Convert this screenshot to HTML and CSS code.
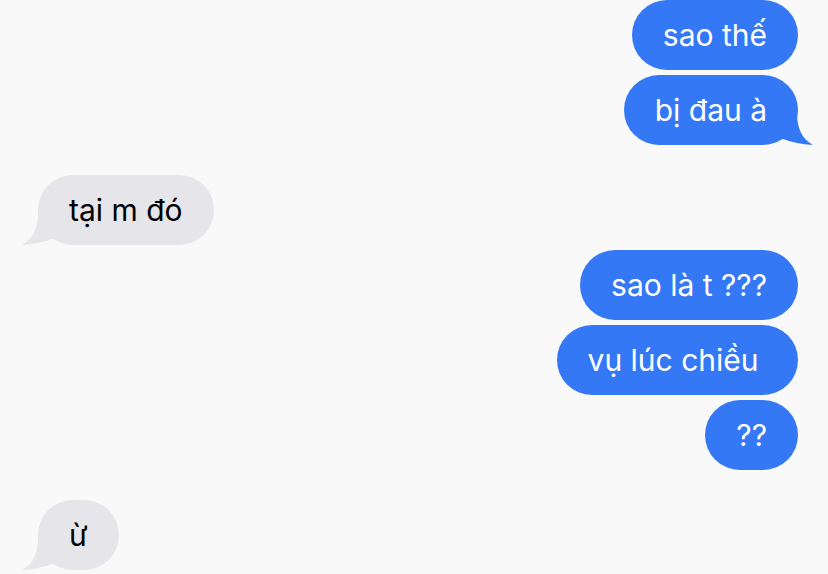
FILE: index.html
```html
<!DOCTYPE html>
<html lang="vi">
<head>
<meta charset="utf-8">
<link rel="stylesheet" href="styles.css">
</head>
<body>
<div class="thread">
  <div class="group group-me">
    <div class="bubble me">sao thế</div>
    <div class="bubble me tail">bị đau à<svg class="tail-svg tail-me" viewBox="0 0 40 40" width="40" height="40"><path d="M23 4 Q22 30 39 39 Q22 38 9 33 L0 30 L0 0 Z" fill="#3478f6"/></svg></div>
  </div>
  <div class="group group-them spaced">
    <div class="bubble them tail">tại m đó<svg class="tail-svg tail-them" viewBox="0 0 40 40" width="40" height="40"><path d="M17 4 Q18 30 1 39 Q18 38 31 33 L40 30 L40 0 Z" fill="#e5e5ea"/></svg></div>
  </div>
  <div class="group group-me">
    <div class="bubble me">sao là t ???</div>
    <div class="bubble me">vụ lúc chiều </div>
    <div class="bubble me">??</div>
  </div>
  <div class="group group-them spaced">
    <div class="bubble them tail">ừ<svg class="tail-svg tail-them" viewBox="0 0 40 40" width="40" height="40"><path d="M17 4 Q18 30 1 39 Q18 38 31 33 L40 30 L40 0 Z" fill="#e5e5ea"/></svg></div>
  </div>
</div>
</body>
</html>
```

FILE: styles.css
```css
* { box-sizing: border-box; }
html, body {
  margin: 0;
  padding: 0;
  background: #f9f9f9;
}
body {
  width: 828px;
  height: 574px;
  overflow: hidden;
  font-family: "Inter", "Liberation Sans", sans-serif;
}
.thread {
  display: flex;
  flex-direction: column;
  gap: 5px;
  padding: 0 30px 0 38px;
}
.group {
  display: flex;
  flex-direction: column;
  gap: 5px;
}
.spaced { margin-top: 25px; }
.group-me { align-items: flex-end; }
.group-them { align-items: flex-start; }
.bubble {
  position: relative;
  height: 70px;
  line-height: 70px;
  padding: 0 31px;
  border-radius: 35px;
  font-size: 30px;
  white-space: pre;
}
.me {
  background: #3478f6;
  color: #ffffff;
}
.them {
  background: #e5e5ea;
  color: #000000;
}
.tail-svg {
  position: absolute;
  bottom: -1px;
  display: block;
}
.tail-me { right: -16px; }
.tail-them { left: -17px; }
```
